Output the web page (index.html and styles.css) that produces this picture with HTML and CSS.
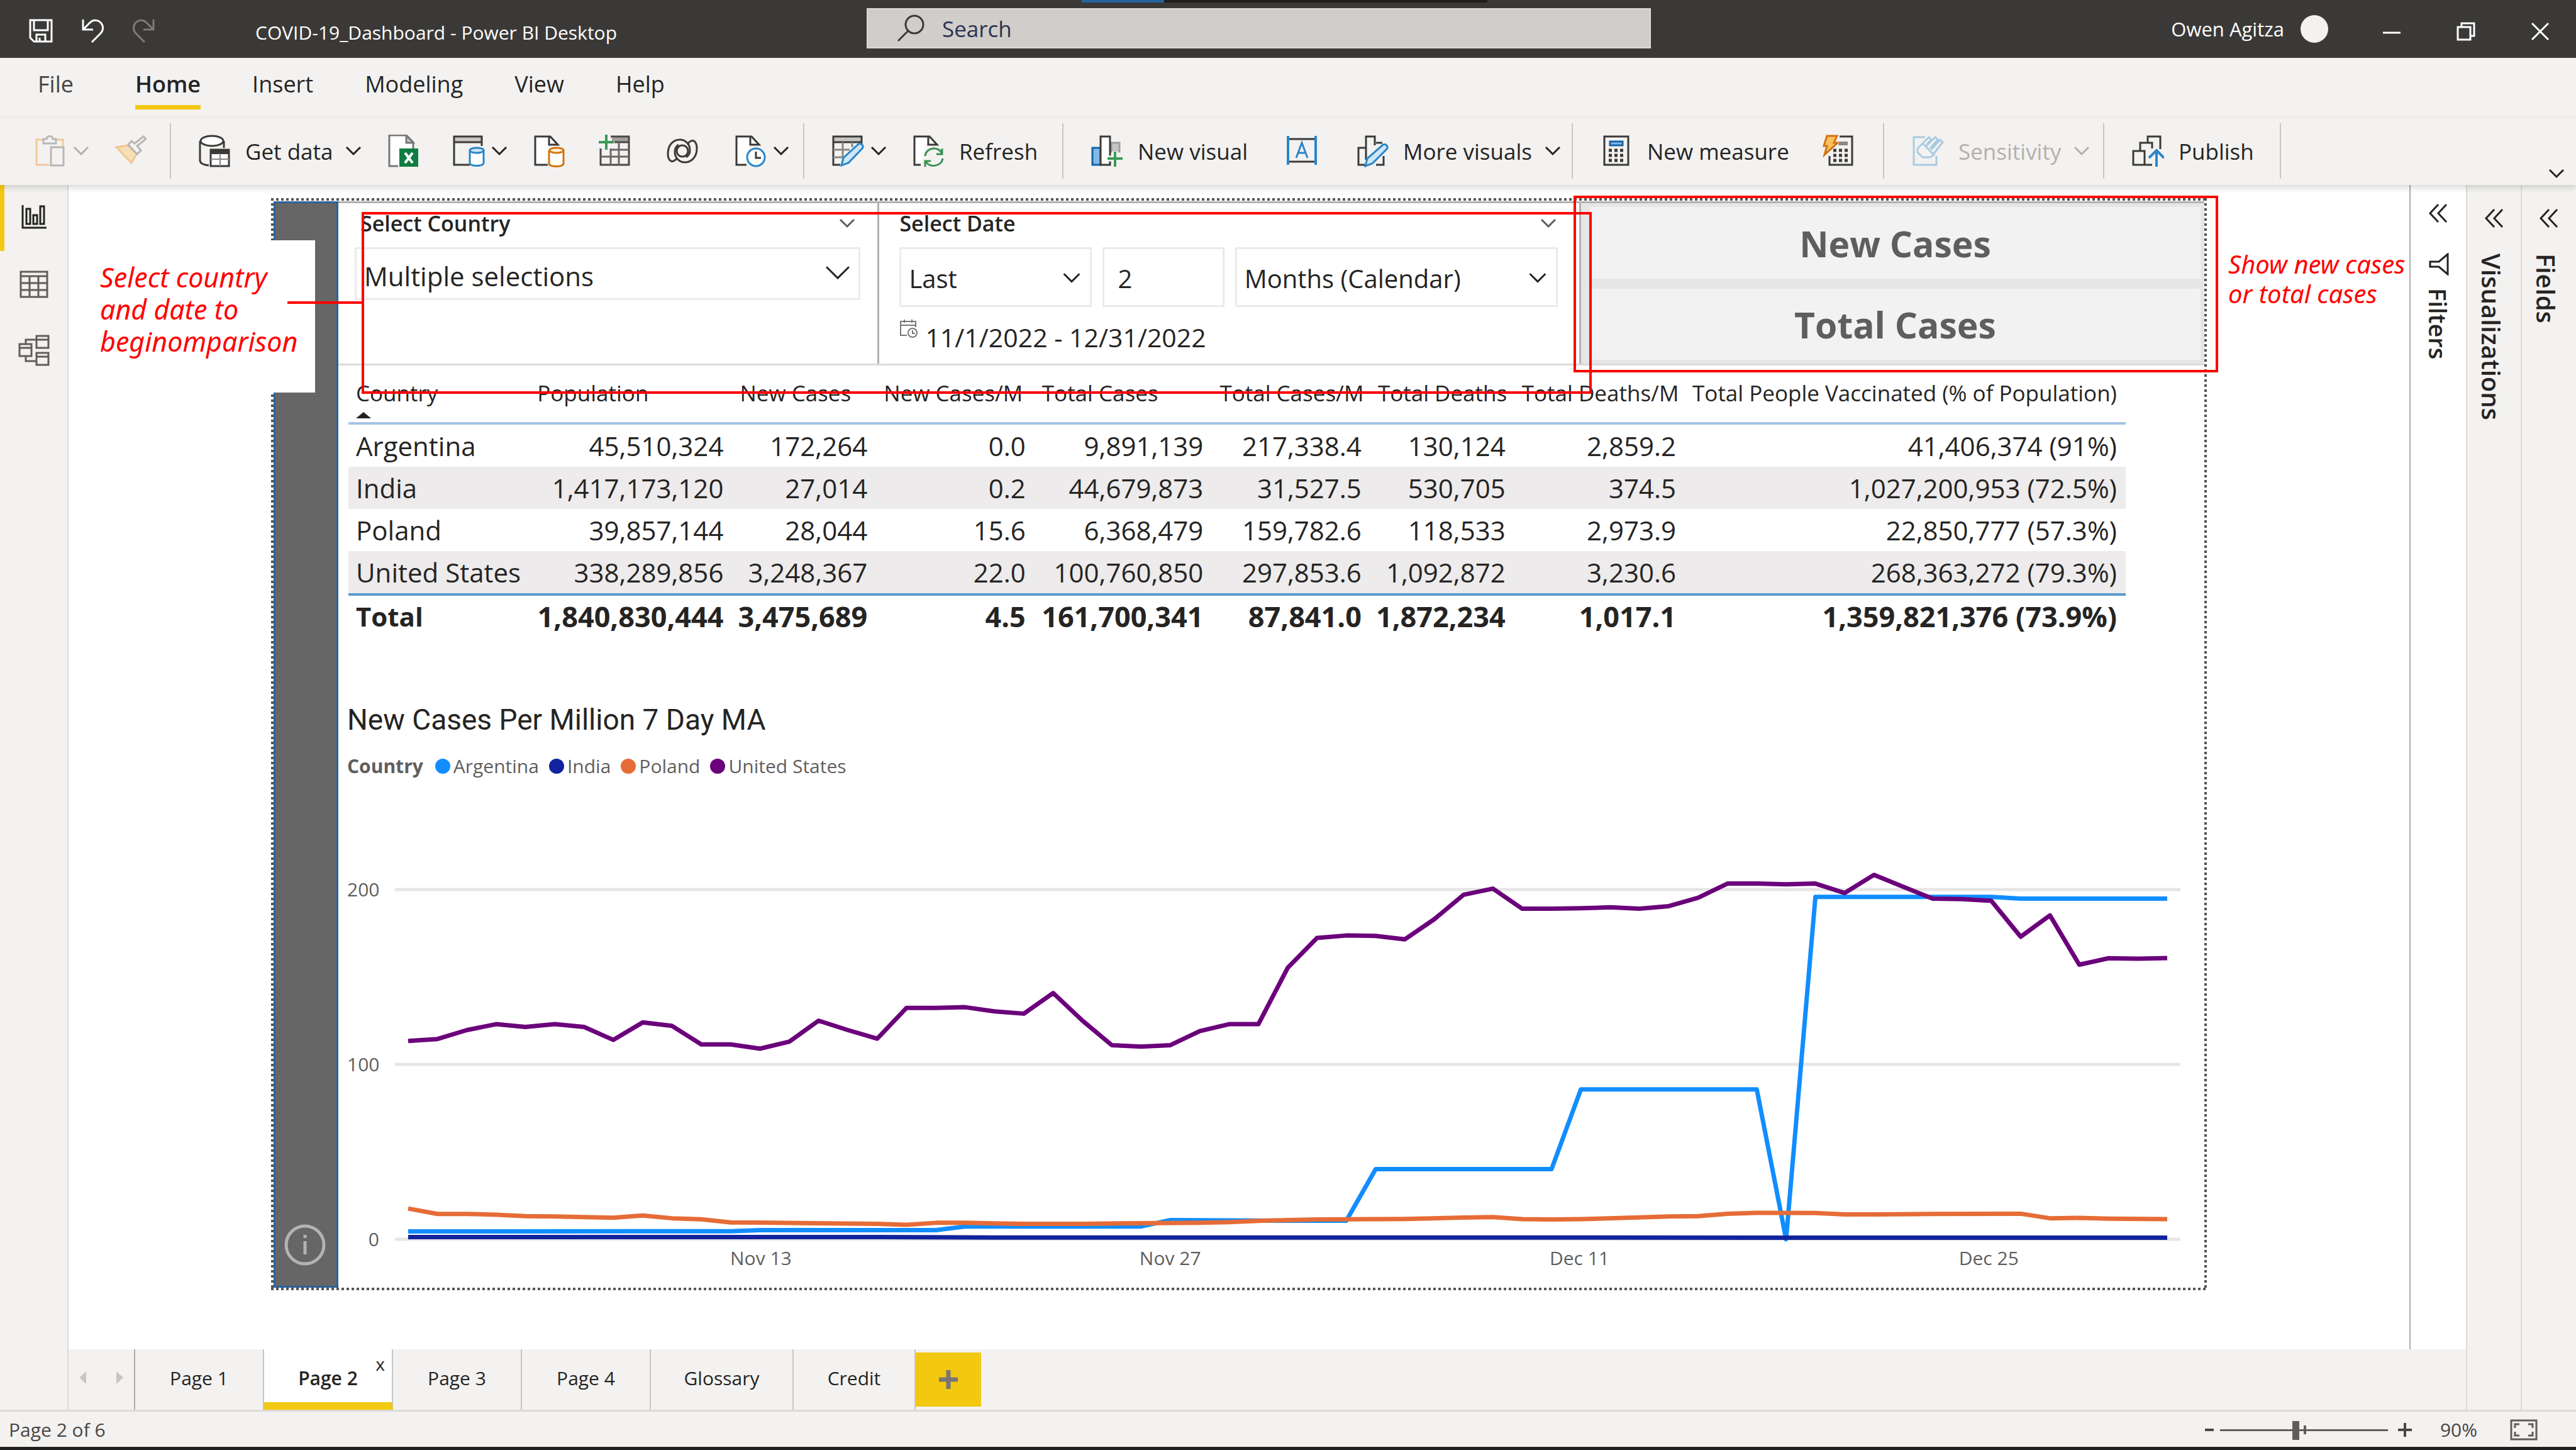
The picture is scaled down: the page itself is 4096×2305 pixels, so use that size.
FILE: index.html
```html
<!DOCTYPE html>
<html lang="en">
<head>
<meta charset="utf-8">
<title>COVID-19_Dashboard - Power BI Desktop</title>
<link rel="stylesheet" href="styles.css">
</head>
<body>
<svg class="defs" aria-hidden="true">
  <symbol id="chevron" viewBox="0 0 26 16"><path d="M2 2l11 11L24 2" fill="none" stroke="currentColor" stroke-width="3" vector-effect="non-scaling-stroke"/></symbol>
  <symbol id="collapse" viewBox="0 0 34 32"><path d="M17 2L4 16l13 14M30 2L17 16l13 14" fill="none" stroke="currentColor" stroke-width="3"/></symbol>
</svg>
<div class="app">
  <header class="titlebar">
    <div class="quick">
      <button class="plain" aria-label="Save"><svg width="38" height="38" viewBox="0 0 38 38" fill="none" stroke="#fff" stroke-width="3"><path d="M2 2h34v34H8l-6-6zM8 2v16h22V2M12 36V25h14v11M17 36v-6"/></svg></button>
      <button class="plain" aria-label="Undo"><svg width="38" height="38" viewBox="0 0 38 38" fill="none" stroke="#fff" stroke-width="3"><path d="M4 1v16h16M4 17L15 6c6-6 14-4 18 1s3 12-1 16L18 37"/></svg></button>
      <button class="plain" aria-label="Redo"><svg width="38" height="38" viewBox="0 0 38 38" fill="none" stroke="#7d7b79" stroke-width="3"><path d="M34 1v16H18M34 17L23 6C17 0 9 2 5 7s-3 12 1 16l14 14"/></svg></button>
    </div>
    <h1 class="doc-title">COVID-19_Dashboard - Power BI Desktop</h1>
    <div class="drag-strip"><span></span></div>
    <label class="search">
      <svg width="44" height="44" viewBox="0 0 44 44" fill="none" stroke="#3b3a39" stroke-width="3"><circle cx="28" cy="16" r="14"/><path d="M18 26L2 42"/></svg>
      <input type="search" placeholder="Search" aria-label="Search">
    </label>
    <div class="account"><span>Owen Agitza</span><span class="avatar"></span></div>
    <div class="window-buttons">
      <button class="plain" aria-label="Minimize"><svg width="30" height="30" viewBox="0 0 30 30"><path d="M1 17h28" stroke="#fff" stroke-width="3"/></svg></button>
      <button class="plain" aria-label="Restore"><svg width="30" height="30" viewBox="0 0 30 30" fill="none" stroke="#fff" stroke-width="3"><path d="M2 8h20v20H2zM8 8V2h20v20h-6"/></svg></button>
      <button class="plain" aria-label="Close"><svg width="30" height="30" viewBox="0 0 30 30"><path d="M2 2l26 26M28 2L2 28" stroke="#fff" stroke-width="3"/></svg></button>
    </div>
  </header>

  <nav class="menu">
    <a href="#file" class="file">File</a><a href="#home" class="active">Home</a><a href="#insert">Insert</a><a href="#modeling">Modeling</a><a href="#view">View</a><a href="#help">Help</a>
  </nav>

  <div class="ribbon">
    <div class="group g-clip">
      <button class="tool disabled" aria-label="Paste"><svg class="ic" viewBox="0 0 52 52" fill="none" stroke-width="3"><path d="M14 8H4v40h20M36 8h10v10" stroke="#f2c99b"/><path d="M15 14V7h5c0-6 10-6 10 0h5v7z" stroke="#b9b7b5"/><path d="M27 20h20v29H27z" stroke="#b9b7b5"/></svg><svg class="chev"><use href="#chevron"/></svg></button>
      <button class="tool disabled" aria-label="Format painter"><svg class="ic" viewBox="0 0 52 52" fill="none" stroke-width="3"><path d="M3 20l18-3 14 14-8 14z" fill="#f7dfb8" stroke="#f0c68f"/><path d="M22 16l14 15 6-6-6-7L50 7l-4-4-14 11-5-4z" fill="#f3f2f1" stroke="#b9b7b5"/></svg></button>
    </div>
    <div class="group g-data">
      <button class="tool"><svg class="ic" viewBox="0 0 52 52" fill="none" stroke="#3b3a39" stroke-width="3"><ellipse cx="22" cy="10" rx="18" ry="8" fill="#fff"/><path d="M3 10v31c0 4 5 7 14 8M41 10v11"/><path d="M20 24h29v26H20z" fill="#fff"/><path d="M20 28h29" stroke-width="6"/><path d="M20 39h29M35 30v20" stroke="#8a8886" stroke-width="2"/></svg><span>Get data</span><svg class="chev"><use href="#chevron"/></svg></button>
      <button class="tool" aria-label="Excel workbook"><svg class="ic" viewBox="0 0 52 52"><path d="M18 50H4V1h27l11 11v10" fill="#fff" stroke="#7a7876" stroke-width="3"/><path d="M31 1v12h11z" fill="#c8c6c4" stroke="#7a7876" stroke-width="3"/><path d="M20 22h30v29H20z" fill="#107c41"/><path d="M29 29l12 16M41 29L29 45" stroke="#fff" stroke-width="4"/></svg></button>
      <button class="tool" aria-label="Data hub"><svg class="ic" viewBox="0 0 52 52" fill="none" stroke-width="3"><path d="M4 4h42v7H4z" fill="#c8c6c4"/><path d="M28 48H3V3h44v15M3 12h44" stroke="#3b3a39"/><path d="M28 25v20c0 6 22 6 22 0V25" fill="#fff" stroke="#2a86c8"/><ellipse cx="39" cy="25" rx="11" ry="4" fill="#cfe6f7" stroke="#2a86c8"/></svg><svg class="chev"><use href="#chevron"/></svg></button>
      <button class="tool" aria-label="SQL Server"><svg class="ic" viewBox="0 0 52 52" fill="none" stroke-width="3"><path d="M24 48H4V3h24l12 13H26V3" fill="#fff" stroke="#3b3a39"/><path d="M26 25v21c0 6 23 6 23 0V25" fill="#fff" stroke="#d2740e"/><ellipse cx="38" cy="25" rx="11" ry="4" fill="#fff0d8" stroke="#d2740e"/></svg></button>
      <button class="tool" aria-label="Enter data"><svg class="ic" viewBox="0 0 52 52" fill="none" stroke-width="3"><path d="M22 4h26v7H22z" fill="#a19f9d"/><path d="M20 3h29v45H4V22M26 12h23" stroke="#4a4947"/><path d="M20 24h29M4 35h45M20 22v26M33 12v36" stroke="#6b6967"/><path d="M13 0v24M1 12h24" stroke="#3a9b57" stroke-width="4"/></svg></button>
      <button class="tool" aria-label="Dataverse"><svg class="ic" viewBox="0 0 52 52" fill="none" stroke="#3b3a39" stroke-width="3"><circle cx="26" cy="26" r="9"/><path id="swirl" d="M17 38C9 47 3 41 3 30 3 16 12 8 22 8c9 0 16 7 16 17 0 5-3 9-6 11"/><use href="#swirl" transform="rotate(180 26 26)"/></svg></button>
      <button class="tool" aria-label="Recent sources"><svg class="ic" viewBox="0 0 52 52" fill="none" stroke-width="3"><path d="M20 48H4V3h24l12 13H26V3" fill="#fff" stroke="#3b3a39"/><circle cx="35" cy="36" r="14" fill="#fff" stroke="#2a86c8"/><path d="M35 27v10h8" stroke="#3b3a39"/></svg><svg class="chev"><use href="#chevron"/></svg></button>
    </div>
    <div class="group g-query">
      <button class="tool" aria-label="Transform data"><svg class="ic" viewBox="0 0 52 52" fill="none" stroke-width="3"><path d="M3 4h44v7H3z" fill="#c8c6c4"/><path d="M14 48H3V3h45v12M3 12h45" stroke="#3b3a39"/><path d="M3 24h26M3 36h16M18 12v24M33 12v8" stroke="#8a8886"/><path d="M16 49l3-12 24-22c5-2 9 3 6 7L27 45z" fill="#cfe6f7" stroke="#2a86c8"/></svg><svg class="chev"><use href="#chevron"/></svg></button>
      <button class="tool"><svg class="ic" viewBox="0 0 52 52" fill="none" stroke-width="3"><path d="M14 48H4V3h24l12 13H26V3" fill="#fff" stroke="#3b3a39"/><path d="M21 34c1-14 22-16 27-4M48 22v9h-9M49 38c-2 13-21 15-27 5M21 51v-9h9" stroke="#3a8f52"/></svg><span>Refresh</span></button>
    </div>
    <div class="group g-insert">
      <button class="tool"><svg class="ic" viewBox="0 0 52 52" stroke-width="3"><path d="M3 21h13v27H3z" fill="#83b9e8" stroke="#1464a5"/><path d="M33 13h13v14H33z" fill="#c8c6c4" stroke="#a19f9d"/><path d="M16 3h15v45H16z" fill="#fff" stroke="#3b3a39"/><path d="M39 26v25M27 38h25" stroke="#f3f2f1" stroke-width="9"/><path d="M39 27v24M27 38h24" stroke="#3a9b57" stroke-width="4"/></svg><span>New visual</span></button>
      <button class="tool" aria-label="Text box"><svg class="ic" viewBox="0 0 52 52" fill="none" stroke-width="3"><path d="M3 7h46M3 43h46" stroke="#3b3a39"/><path d="M4 2v46M48 2v46" stroke="#2a86c8" stroke-width="4"/><path d="M17 37l9-24 9 24M20 29h12" stroke="#2a86c8"/></svg></button>
      <button class="tool"><svg class="ic" viewBox="0 0 52 52" fill="none" stroke-width="3"><path d="M14 48H4V21h12M16 40V3h14v14M32 13h10M32 48h12V34" stroke="#3b3a39"/><path d="M15 50l3-12 25-22c5-2 9 3 6 7L26 46z" fill="#cfe6f7" stroke="#2a86c8"/></svg><span>More visuals</span><svg class="chev"><use href="#chevron"/></svg></button>
    </div>
    <div class="group g-calc">
      <button class="tool"><svg class="ic" viewBox="0 0 52 52" fill="none" stroke-width="3"><path d="M7 3h38v45H7z" stroke="#3b3a39"/><path d="M16 11h20v6H16z" fill="#83b9e8" stroke="#1464a5"/><path d="M14 25h24M14 33h24M14 41h24" stroke="#3b3a39" stroke-width="5" stroke-dasharray="5 4"/></svg><span>New measure</span></button>
      <button class="tool" aria-label="Quick measure"><svg class="ic" viewBox="0 0 52 52" fill="none" stroke-width="3"><path d="M28 3h20v45H12V34" stroke="#3b3a39"/><path d="M28 11h13v6H26z" fill="#8a8886"/><path d="M18 25h24M18 33h24M18 41h24" stroke="#3b3a39" stroke-width="5" stroke-dasharray="5 4"/><path d="M8 2h16l-5 11h6L4 32l4-14H3z" fill="#fbc15e" stroke="#d2740e"/></svg></button>
    </div>
    <div class="group g-sens">
      <button class="tool disabled"><svg class="ic" viewBox="0 0 52 52" fill="none" stroke="#a9cbdf" stroke-width="3"><path d="M22 4H4v44h36V34"/><path d="M10 22l8-8 18 18-6 4H18l-8-8zM18 14l10-10 4 4-8 8M24 18l14-14 4 4-12 14M32 24L46 8l4 4-14 18"/></svg><span>Sensitivity</span><svg class="chev"><use href="#chevron"/></svg></button>
    </div>
    <div class="group g-share">
      <button class="tool"><svg class="ic" viewBox="0 0 52 52" fill="none" stroke="#3b3a39" stroke-width="3"><path d="M26 12V3h20v20M14 26V13h19v9M3 26h18v22H3zM21 48h12"/><path d="M40 51V26M28 37l12-12 12 12" stroke="#2a86c8" stroke-width="4"/></svg><span>Publish</span></button>
    </div>
    <button class="plain expand" aria-label="Expand ribbon"><svg class="chev"><use href="#chevron"/></svg></button>
  </div>

  <div class="body">
    <nav class="rail">
      <button class="plain on" aria-label="Report view"><svg width="46" height="46" viewBox="0 0 46 46" fill="none" stroke="#252423" stroke-width="3"><path d="M4 3v36h38M10 9h6v24h-6zM21 19h6v14h-6zM32 5h6v28h-6z"/></svg></button>
      <button class="plain" aria-label="Data view"><svg width="46" height="46" viewBox="0 0 46 46" fill="none" stroke="#605e5c" stroke-width="3"><path d="M2 3h42v40H2zM2 10h42M2 21h42M2 32h42M16 10v33M30 10v33"/></svg></button>
      <button class="plain" aria-label="Model view"><svg width="50" height="50" viewBox="0 0 50 50" fill="none" stroke="#605e5c" stroke-width="3"><path d="M2 15h19v19H2zM2 21h19M29 2h19v19H29zM29 8h19M29 29h19v19H29zM29 35h19M12 15V8h17M12 34v8h17"/></svg></button>
    </nav>

    <main class="workspace">
      <div class="canvas">
        <aside class="side"><svg width="66" height="66" viewBox="0 0 66 66" fill="none" stroke="#b3b3b3" stroke-width="5"><circle cx="33" cy="33" r="30"/><path d="M33 27v21M33 17v5"/></svg></aside>
        <div class="report">
          <div class="slicers">
            <section class="slicer country">
              <header><h2>Select Country</h2><svg class="chev thin"><use href="#chevron"/></svg></header>
              <div class="picker"><select aria-label="Select Country"><option>Multiple selections</option></select><svg class="chev big"><use href="#chevron"/></svg></div>
            </section>
            <section class="slicer date">
              <header><h2>Select Date</h2><svg class="chev thin"><use href="#chevron"/></svg></header>
              <div class="relative-date">
                <div class="picker"><select aria-label="Direction"><option>Last</option></select><svg class="chev"><use href="#chevron"/></svg></div>
                <input type="text" value="2" aria-label="Count">
                <div class="picker"><select aria-label="Unit"><option>Months (Calendar)</option></select><svg class="chev"><use href="#chevron"/></svg></div>
              </div>
              <p class="range"><svg width="30" height="30" viewBox="0 0 30 30" fill="none" stroke="#777" stroke-width="2"><path d="M12 25H2V3h24v9M2 9h24M8 0v5M20 0v5"/><circle cx="21" cy="21" r="7"/><path d="M21 17v5h4"/></svg>11/1/2022 - 12/31/2022</p>
            </section>
            <div class="measures"><button>New Cases</button><button>Total Cases</button></div>
          </div>

          <table class="stats">
            <colgroup><col class="c1"><col class="c2"><col class="c3"><col class="c4"><col class="c5"><col class="c6"><col class="c7"><col class="c8"><col class="c9"></colgroup>
            <thead><tr><th>Country<svg class="sort" viewBox="0 0 24 10"><path d="M0 10L12 0l12 10z" fill="#252423"/></svg></th><th>Population</th><th>New Cases</th><th>New Cases/M</th><th>Total Cases</th><th>Total Cases/M</th><th>Total Deaths</th><th>Total Deaths/M</th><th>Total People Vaccinated (% of Population)</th></tr></thead>
            <tbody>
              <tr><td>Argentina</td><td>45,510,324</td><td>172,264</td><td>0.0</td><td>9,891,139</td><td>217,338.4</td><td>130,124</td><td>2,859.2</td><td>41,406,374 (91%)</td></tr>
              <tr><td>India</td><td>1,417,173,120</td><td>27,014</td><td>0.2</td><td>44,679,873</td><td>31,527.5</td><td>530,705</td><td>374.5</td><td>1,027,200,953 (72.5%)</td></tr>
              <tr><td>Poland</td><td>39,857,144</td><td>28,044</td><td>15.6</td><td>6,368,479</td><td>159,782.6</td><td>118,533</td><td>2,973.9</td><td>22,850,777 (57.3%)</td></tr>
              <tr><td>United States</td><td>338,289,856</td><td>3,248,367</td><td>22.0</td><td>100,760,850</td><td>297,853.6</td><td>1,092,872</td><td>3,230.6</td><td>268,363,272 (79.3%)</td></tr>
            </tbody>
            <tfoot><tr><td>Total</td><td>1,840,830,444</td><td>3,475,689</td><td>4.5</td><td>161,700,341</td><td>87,841.0</td><td>1,872,234</td><td>1,017.1</td><td>1,359,821,376 (73.9%)</td></tr></tfoot>
          </table>

          <section class="chart">
            <h2>New Cases Per Million 7 Day MA</h2>
            <div class="legend"><b>Country</b><span class="k argentina">Argentina</span><span class="k india">India</span><span class="k poland">Poland</span><span class="k usa">United States</span></div>
            <div class="plot">
              <div class="y-axis"><span>200</span><span>100</span><span>0</span></div>
              <svg class="lines" viewBox="-0.45 -200 60.9 200" preserveAspectRatio="none" fill="none">
                <g transform="scale(1 -1)">
                  <path class="grid" d="M-.45 0h60.9M-.45 100h60.9M-.45 200h60.9"/>
                  <polyline class="argentina" points="0,4.5 11,4.6 12,5.2 18,5.2 19,7.3 25,7.3 26,11 30,10.6 32,10.6 33,40.1 39,40.1 40,85.7 46,85.7 47,0 48,195.8 54,195.8 55,194.8 60,194.8"/>
                  <polyline class="india" points="0,1.3 16,1.3 20,1 60,.9"/>
                  <polyline class="poland" points="0,17.6 1,14.5 2,14.5 3,14 4,13.2 5,13 6,12.7 7,12.3 8,13.6 9,12 10,11.4 11,9.6 12,9.5 16,8.8 17,8.3 18,9.4 19,9.4 20,9.1 21,8.8 23,8.8 25,9.2 27,9.4 28,9.8 29,10.5 30,11 31,11.3 34,11.6 36,12.4 37,12.7 38,11.5 39,11.3 40,11.5 42,12.5 43,13 44,13.2 45,14.6 46,15.1 48,15 49,14.2 50,14.2 52,14.5 55,14.6 56,12 57,12.2 58,11.8 60,11.5"/>
                  <polyline class="usa" points="0,113.4 1,114.5 2,119.6 3,123 4,121.4 5,123 6,121.4 7,114 8,124 9,122 10,111.4 11,111.4 12,109 13,113 14,125 15,119.6 16,114.7 17,132.3 18,132.3 19,132.7 20,130.3 21,129 22,140.8 23,125 24,111 25,110.2 26,111 27,119 28,123 29,123 30,155.2 31,172.3 32,173.7 33,173.5 34,171.5 35,183 36,197 37,200.5 38,189 39,189 40,189.3 41,189.8 42,189 43,190.5 44,195.3 45,203.4 46,203.4 47,203 48,203.4 49,198 50,208.4 51,201.5 52,194.8 53,194.5 54,193.5 55,173 56,185.2 57,157 58,160.7 59,160.4 60,160.8"/>
                </g>
              </svg>
            </div>
            <div class="x-axis"><span>Nov 13</span><span>Nov 27</span><span>Dec 11</span><span>Dec 25</span></div>
          </section>
        </div>

        <p class="note note-left">Select country<br>and date to<br>beginomparison</p>
        <span class="mark mark-line"></span>
        <span class="mark mark-slicers"></span>
        <span class="mark mark-measures"></span>
        <p class="note note-right">Show new cases<br>or total cases</p>
      </div>
    </main>

    <aside class="pane filters"><button class="plain" aria-label="Expand filters"><svg width="36" height="32"><use href="#collapse"/></svg></button><svg width="34" height="36" viewBox="0 0 34 36" fill="none" stroke="#252423" stroke-width="3"><path d="M32 2v32L18 22H4v-8h14z"/></svg><h2>Filters</h2></aside>
    <aside class="pane visualizations"><button class="plain" aria-label="Expand visualizations"><svg width="36" height="32"><use href="#collapse"/></svg></button><h2>Visualizations</h2></aside>
    <aside class="pane fields"><button class="plain" aria-label="Expand fields"><svg width="36" height="32"><use href="#collapse"/></svg></button><h2>Fields</h2></aside>

    <nav class="pages">
      <div class="scroll"><svg width="11" height="20" viewBox="0 0 11 20"><path d="M11 0v20L0 10z" fill="#c8c6c4"/></svg><svg width="11" height="20" viewBox="0 0 11 20"><path d="M0 0v20l11-10z" fill="#c8c6c4"/></svg></div>
      <button class="w1">Page 1</button><button class="w1 current">Page 2<span class="close">x</span></button><button class="w1">Page 3</button><button class="w1">Page 4</button><button class="w2">Glossary</button><button class="w3">Credit</button>
      <button class="add" aria-label="New page"><svg width="30" height="30" viewBox="0 0 30 30"><path d="M15 0v30M0 15h30" stroke="#7a7574" stroke-width="7"/></svg></button>
    </nav>
  </div>

  <footer class="status">
    <span class="where">Page 2 of 6</span>
    <button class="plain" aria-label="Zoom out"><svg width="14" height="26" viewBox="0 0 14 26"><path d="M0 13h14" stroke="#484644" stroke-width="4"/></svg></button>
    <div class="zoom"><input type="range" min="0" max="100" value="45" aria-label="Zoom"></div>
    <button class="plain" aria-label="Zoom in"><svg width="22" height="26" viewBox="0 0 22 26"><path d="M0 13h22M11 2v22" stroke="#484644" stroke-width="4"/></svg></button>
    <span class="percent">90%</span>
    <button class="plain" aria-label="Fit to page"><svg width="44" height="34" viewBox="0 0 44 34" fill="none" stroke="#605e5c" stroke-width="3"><path d="M2 2h40v30H2zM8 14V8h7M29 8h7v6M36 20v6h-7M15 26H8v-6"/></svg></button>
  </footer>
</div>
</body>
</html>
```

FILE: styles.css
```css
* { box-sizing: border-box; }
html, body { margin: 0; height: 100%; }
body { font-family: "Open Sans", "Noto Sans", sans-serif; color: #252423; background: #f3f2f1; }
h1, h2, p { margin: 0; font-weight: 400; }
button, input, select { font: inherit; color: inherit; margin: 0; border: 0; border-radius: 0; background: none; }
button { padding: 0; }
svg { display: block; flex: none; }
.defs { position: absolute; width: 0; height: 0; }
.plain { display: flex; align-items: center; justify-content: center; }
.chev { width: 26px; height: 16px; }

.app { display: flex; flex-direction: column; height: 100vh; border-bottom: 5px solid #1f1f1f; }

/* Title bar */
.titlebar { position: relative; flex: none; display: flex; align-items: center; height: 92px; padding: 0 42px 0 46px; background: #3b3937; color: #fff; font-size: 31px; }
.quick { display: flex; gap: 44px; margin-top: 6px; }
.doc-title { font-size: 30px; margin: 10px 0 0 158px; flex: 0 0 972px; }
.search { flex: 0 1 1247px; display: flex; align-items: center; height: 64px; padding: 0 46px; gap: 28px; background: #d0cdcb; border: 2px solid #dddbd9; font-size: 35px; margin-bottom: 2px; }
.search input { flex: 1; min-width: 0; padding: 0; outline: 0; }
.search input::placeholder { color: #2b3350; opacity: 1; }
.drag-strip { position: absolute; top: 0; left: 42%; width: 645px; height: 4px; background: #1f1e1d; }
.drag-strip span { display: block; width: 131px; height: 4px; background: #22649c; }
.account { display: flex; align-items: center; gap: 26px; margin-left: auto; }
.avatar { width: 44px; height: 44px; border-radius: 50%; background: #f3f2f1; }
.window-buttons { display: flex; gap: 88px; margin: 8px 0 0 86px; }

/* Menu */
.menu { flex: none; display: flex; align-items: flex-start; gap: 82px; height: 96px; padding: 18px 60px 0; font-size: 36px; line-height: 48px; }
.menu a { color: #252423; text-decoration: none; height: 64px; }
.menu .file { color: #484644; margin-right: 16px; }
.menu .active { font-weight: 600; border-bottom: 7px solid #f2c811; }

/* Ribbon */
.ribbon { position: relative; z-index: 2; flex: none; display: flex; height: 106px; padding-top: 8px; background: #f3f2f1; box-shadow: 0 4px 10px rgba(0, 0, 0, .16); font-size: 35px; }
.group { display: flex; align-items: center; height: 88px; padding-left: 17px; border-right: 2px solid #c8c6c4; }
.tool { display: flex; align-items: center; padding: 0 26px; white-space: nowrap; }
.tool .ic { width: 52px; height: 52px; }
.tool span { margin-left: 23px; }
.tool .chev { margin: 0 -12px 0 20px; }
.tool .ic + .chev { margin-left: 10px; }
.tool.disabled { color: #b3b0ad; }
.g-clip { width: 272px; padding-left: 28px; }
.g-data { width: 1007px; }
.g-data .tool:nth-child(n+6) { margin-left: 4px; }
.g-query { width: 412px; }
.g-insert { width: 810px; }
.g-insert .tool + .tool { margin-left: 8px; }
.g-calc { width: 495px; }
.g-sens { width: 350px; }
.g-share { width: 281px; }
.expand { margin: auto 18px 10px auto; }

/* Body */
.body { flex: 1; min-height: 0; display: grid; grid-template: minmax(0, 1fr) 96px / 109px minmax(0, 1fr) 90px 87px 88px; border-bottom: 3px solid #dddbd9; }
.rail { grid-row: 1 / 3; grid-column: 1; border-right: 2px solid #dddbd9; }
.rail button { width: 100%; height: 105px; }
.rail button.on { border-left: 7px solid #f2c811; padding: 0 4px 2px 0; }
.workspace { grid-row: 1; grid-column: 2; display: flex; min-width: 0; background: #fff; padding: 21px 322px 94px 322px; }
.pane { grid-row: 1 / 3; display: flex; flex-direction: column; align-items: center; padding-top: 37px; border-left: 2px solid #dddbd9; }
.pane h2 { writing-mode: vertical-rl; font-size: 40px; font-weight: 600; line-height: 48px; margin: 40px 10px 0 0; }
.filters { grid-row: 1; grid-column: 3; background: #fff; border-left-color: #b0adab; padding-top: 29px; }
.filters > svg { margin-top: 47px; }
.pane.filters h2 { margin: 20px 0 0; font-size: 38px; }
.visualizations { grid-column: 4; }
.fields { grid-column: 5; }

/* Report canvas */
.canvas {
  position: relative; flex: 1; display: flex; min-width: 0; padding: 5px 4px 4px;
  background:
    repeating-linear-gradient(90deg, #555 0 4px, transparent 4px 8px) top / 100% 4px no-repeat,
    repeating-linear-gradient(90deg, #555 0 4px, transparent 4px 8px) bottom / 100% 4px no-repeat,
    repeating-linear-gradient(#555 0 4px, transparent 4px 8px) left / 4px 100% no-repeat,
    repeating-linear-gradient(#555 0 4px, transparent 4px 8px) right / 4px 100% no-repeat;
}
.side { flex: 0 0 103px; display: flex; align-items: flex-end; justify-content: center; padding: 0 3px 32px 0; background: #666; border: 3px solid #2b639c; }
.report { flex: 1; min-width: 0; display: flex; flex-direction: column; }

.slicers { flex: none; display: flex; height: 261px; border-top: 3px solid #b3b0ad; border-bottom: 3px solid #dddbd9; }
.slicer { min-width: 0; border-right: 3px solid #b3b0ad; padding: 10px 34px 0 32px; font-size: 40px; }
.slicer header { display: flex; align-items: center; justify-content: space-between; height: 44px; margin-bottom: 16px; }
.slicer h2 { font-size: 34px; font-weight: 600; }
.slicer.country { flex: 0 0 29%; padding: 10px 27px 0 26px; }
.country header { padding: 0 6px 0 9px; }
.slicer.date { flex: 0 0 37.6%; }
.picker { position: relative; display: flex; border: 3px solid #edebe9; background: #fff; }
.picker select { flex: 1; min-width: 0; appearance: none; padding: 4px 12px 0; outline: 0; }
.picker .chev { position: absolute; right: 14px; top: 50%; margin-top: -8px; width: 30px; height: 18px; }
.thin { width: 30px; color: #605e5c; }
.country .picker { height: 84px; font-size: 42px; }
.country .picker select { padding: 6px 12px 0; }
.country .picker .chev { width: 46px; height: 26px; right: 10px; margin-top: -14px; }
.relative-date { display: grid; grid-template-columns: 307fr 194fr 515fr; gap: 17px; height: 95px; }
.relative-date input { min-width: 0; width: 100%; padding: 4px 21px 0; border: 3px solid #edebe9; outline: 0; background: #fff; }
.range { display: flex; gap: 11px; font-size: 41px; line-height: 56px; margin-top: 20px; }
.measures { flex: 1; min-width: 0; display: grid; gap: 16px; padding: 6px 6px 6px 14px; background: #e6e6e6; }
.measures button { padding-top: 2px; background: #f2f2f2; color: #605e5c; font-size: 57px; line-height: 70px; font-weight: 700; }

.stats { width: calc(100% - 141px); margin-left: 16px; table-layout: fixed; border-collapse: separate; border-spacing: 0; font-size: 42px; line-height: 57px; }
.stats th { position: relative; height: 94px; padding: 20px 0 0 12px; text-align: left; vertical-align: top; font-size: 35px; line-height: 48px; font-weight: 400; white-space: nowrap; border-bottom: 4px solid #a3c3e4; }
.stats td { height: 67px; padding: 0 14px 0 12px; text-align: right; white-space: nowrap; }
.stats td:first-child { text-align: left; }
.stats tbody tr:nth-child(even) { background: #edebeb; }
.stats tfoot td { font-size: 45px; font-weight: 700; padding-left: 0; height: 68px; border-top: 4px solid #5b9bd0; }
.stats tfoot td:first-child { padding-left: 12px; font-size: 42px; }
.sort { position: absolute; left: 12px; bottom: 6px; width: 24px; height: 10px; }
.c1 { width: 10.2%; } .c2 { width: 11.4%; } .c3 { width: 8.1%; } .c4 { width: 8.9%; } .c5 { width: 10%; }
.c6 { width: 8.9%; } .c7 { width: 8.1%; } .c8 { width: 9.6%; } .c9 { width: 24.8%; }

.chart { flex: 1; min-height: 0; display: flex; flex-direction: column; padding: 105px 38px 27px 14px; color: #605e5c; font-size: 30px; line-height: 40px; }
.chart h2 { font-family: Roboto, sans-serif; font-size: 46px; line-height: 56px; color: #252423; }
.legend { display: flex; align-items: center; gap: 16px; margin-top: 26px; }
.legend b { margin-right: 3px; }
.k { display: flex; align-items: center; gap: 5px; }
.k::before { content: ""; width: 24px; height: 24px; border-radius: 50%; }
.k.argentina::before { background: #118dff; }
.k.india::before { background: #12239e; }
.k.poland::before { background: #e66c37; }
.k.usa::before { background: #6b007b; }
.plot { flex: 1; min-height: 0; display: flex; gap: 25px; margin-top: 176px; }
.y-axis { width: 51px; display: flex; flex-direction: column; justify-content: space-between; text-align: right; margin: -20px 0; }
.lines { flex: 1; min-width: 0; height: 100%; overflow: visible; }
.lines * { vector-effect: non-scaling-stroke; }
.lines polyline { stroke-width: 7px; stroke-linejoin: round; }
.lines .grid { stroke: #e6e6e6; stroke-width: 5px; }
.lines .argentina { stroke: #118dff; }
.lines .india { stroke: #12239e; }
.lines .poland { stroke: #e66c37; }
.lines .usa { stroke: #6b007b; }
.x-axis { display: flex; margin: 10px 0 0 76px; padding-left: 8.8%; }
.x-axis span { flex: 0 0 25.2%; text-align: center; }

/* Review notes over the canvas */
.note { position: absolute; color: #f00; font-family: "Noto Sans", sans-serif; font-style: italic; white-space: nowrap; }
.note-left { left: -291px; top: 67px; width: 361px; height: 242px; padding: 33px 0 0 19px; background: #fff; font-size: 43px; line-height: 51px; }
.note-right { left: calc(100% + 34px); top: 81px; font-size: 40px; line-height: 47px; }
.mark { position: absolute; border: 4px solid #f00; }
.mark-line { left: 26px; top: 164px; width: 120px; height: 4px; border-width: 2px; }
.mark-slicers { left: 144px; top: 22px; width: 1956px; height: 289px; }
.mark-measures { left: 2071px; right: -18px; top: -4px; height: 281px; }

/* Page tabs */
.pages { grid-row: 2; grid-column: 2 / 4; display: flex; font-size: 30px; }
.pages button { border-right: 2px solid #c8c6c4; }
.scroll { flex: 0 0 106px; display: flex; align-items: center; justify-content: center; gap: 48px; border-right: 2px solid #b0adab; padding-bottom: 6px; }
.w1 { width: 205px; padding-bottom: 6px; }
.w2 { width: 227px; padding-bottom: 6px; }
.w3 { width: 194px; padding-bottom: 6px; }
.pages .current { position: relative; background: #fff; font-weight: 600; border-bottom: 12px solid #f2c811; padding: 6px 0 0; }
.close { position: absolute; right: 11px; top: 4px; font-size: 28px; font-weight: 400; }
.pages .add { display: flex; align-items: center; justify-content: center; width: 104px; margin: 5px 0; background: #f2c811; border: 0; }

/* Status bar */
.status { flex: none; display: flex; align-items: center; height: 56px; padding: 2px 61px 0 14px; font-size: 30px; line-height: 40px; color: #484644; }
.where { margin-right: auto; }
.zoom { position: relative; width: 267px; margin: 0 16px 0 10px; display: flex; align-items: center; }
.zoom::after { content: ""; position: absolute; left: 50%; width: 4px; height: 14px; background: #605e5c; }
.zoom input { width: 100%; height: 30px; padding: 0; appearance: none; }
.zoom input::-webkit-slider-runnable-track { height: 3px; background: #605e5c; }
.zoom input::-webkit-slider-thumb { appearance: none; width: 11px; height: 30px; margin-top: -13px; background: #605e5c; }
.percent { margin: 0 52px 0 45px; }
```
